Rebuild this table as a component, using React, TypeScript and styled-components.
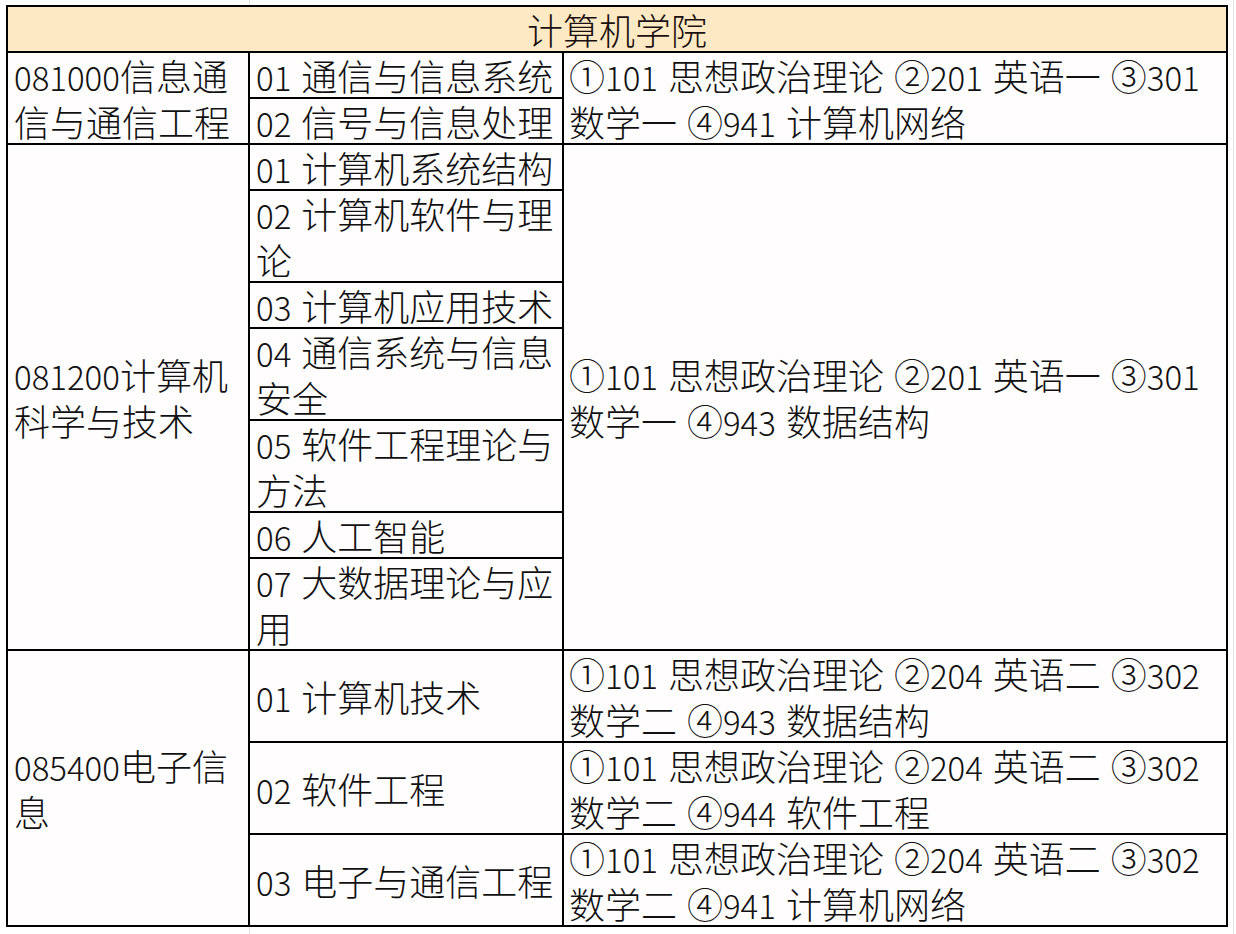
import React from "react";
import styled, { createGlobalStyle } from "styled-components";

const Global = createGlobalStyle`
  html, body {
    margin: 0;
    padding: 0;
    background: #ffffff;
  }
  body {
    font-family: "Noto Sans CJK SC", "Noto Sans", sans-serif;
    color: #111;
  }
`;

const Sheet = styled.div`
  width: 1236px;
  height: 934px;
  box-sizing: border-box;
  padding: 5px 0 0 6px;
  background:
    linear-gradient(#e2e2e2, #e2e2e2) 249px 0 / 1px 100% no-repeat,
    linear-gradient(#e2e2e2, #e2e2e2) 1233px 0 / 1px 100% no-repeat,
    #ffffff;
`;

const Table = styled.table`
  border-collapse: separate;
  border-spacing: 0;
  table-layout: fixed;
  width: 1222px;
  border: 1px solid #000;
  font-size: 36px;
  font-weight: 300;
  word-spacing: 2px;
  background: #fffdfd;
`;

const HeadCell = styled.th`
  box-shadow: inset 0 0 0 1px #000;
  background: #fde9c3;
  font-weight: 300;
  text-align: center;
  padding: 0;
  color: #1a1010;
`;

const Cell = styled.td<{ $wide?: boolean }>`
  box-shadow: inset 0 0 0 1px #000;
  padding: 0 ${(p) => (p.$wide ? "6px" : "5px")} 0 ${(p) => (p.$wide ? "6px" : "7px")};
  vertical-align: middle;
  text-align: left;
  color: #111;
`;

const Line = styled.div`
  line-height: 46px;
  white-space: nowrap;
`;

const Num = styled.span`
  font-size: 33px;
  line-height: 1;
`;

function Lines({ lines }: { lines: string[] }) {
  return (
    <>
      {lines.map((line, li) => (
        <Line key={li}>
          {line.split(/(\d+)/).map((p, i) =>
            /^\d+$/.test(p) ? <Num key={i}>{p}</Num> : <React.Fragment key={i}>{p}</React.Fragment>
          )}
        </Line>
      ))}
    </>
  );
}

type Sub = { name: string[]; exam?: string[] };
type Group = { major: string[]; examSpan?: string[]; subs: Sub[] };

const groups: Group[] = [
  {
    major: ["081000信息通", "信与通信工程"],
    examSpan: ["①101 思想政治理论 ②201 英语一 ③301", "数学一 ④941 计算机网络"],
    subs: [{ name: ["01 通信与信息系统"] }, { name: ["02 信号与信息处理"] }],
  },
  {
    major: ["081200计算机", "科学与技术"],
    examSpan: ["①101 思想政治理论 ②201 英语一 ③301", "数学一 ④943 数据结构"],
    subs: [
      { name: ["01 计算机系统结构"] },
      { name: ["02 计算机软件与理", "论"] },
      { name: ["03 计算机应用技术"] },
      { name: ["04 通信系统与信息", "安全"] },
      { name: ["05 软件工程理论与", "方法"] },
      { name: ["06 人工智能"] },
      { name: ["07 大数据理论与应", "用"] },
    ],
  },
  {
    major: ["085400电子信", "息"],
    subs: [
      { name: ["01 计算机技术"], exam: ["①101 思想政治理论 ②204 英语二 ③302", "数学二 ④943 数据结构"] },
      { name: ["02 软件工程"], exam: ["①101 思想政治理论 ②204 英语二 ③302", "数学二 ④944 软件工程"] },
      { name: ["03 电子与通信工程"], exam: ["①101 思想政治理论 ②204 英语二 ③302", "数学二 ④941 计算机网络"] },
    ],
  },
];

export default function App() {
  return (
    <>
      <Global />
      <Sheet>
        <Table>
          <colgroup>
            <col style={{ width: 242 }} />
            <col style={{ width: 314 }} />
            <col style={{ width: 664 }} />
          </colgroup>
          <tbody>
            <tr>
              <HeadCell colSpan={3}>
                <Line>计算机学院</Line>
              </HeadCell>
            </tr>
            {groups.map((g) =>
              g.subs.map((s, i) => (
                <tr key={g.major.join("") + s.name.join("")}>
                  {i === 0 && (
                    <Cell rowSpan={g.subs.length}>
                      <Lines lines={g.major} />
                    </Cell>
                  )}
                  <Cell>
                    <Lines lines={s.name} />
                  </Cell>
                  {g.examSpan ? (
                    i === 0 && (
                      <Cell $wide rowSpan={g.subs.length}>
                        <Lines lines={g.examSpan} />
                      </Cell>
                    )
                  ) : (
                    <Cell $wide>
                      <Lines lines={s.exam ?? []} />
                    </Cell>
                  )}
                </tr>
              ))
            )}
          </tbody>
        </Table>
      </Sheet>
    </>
  );
}
